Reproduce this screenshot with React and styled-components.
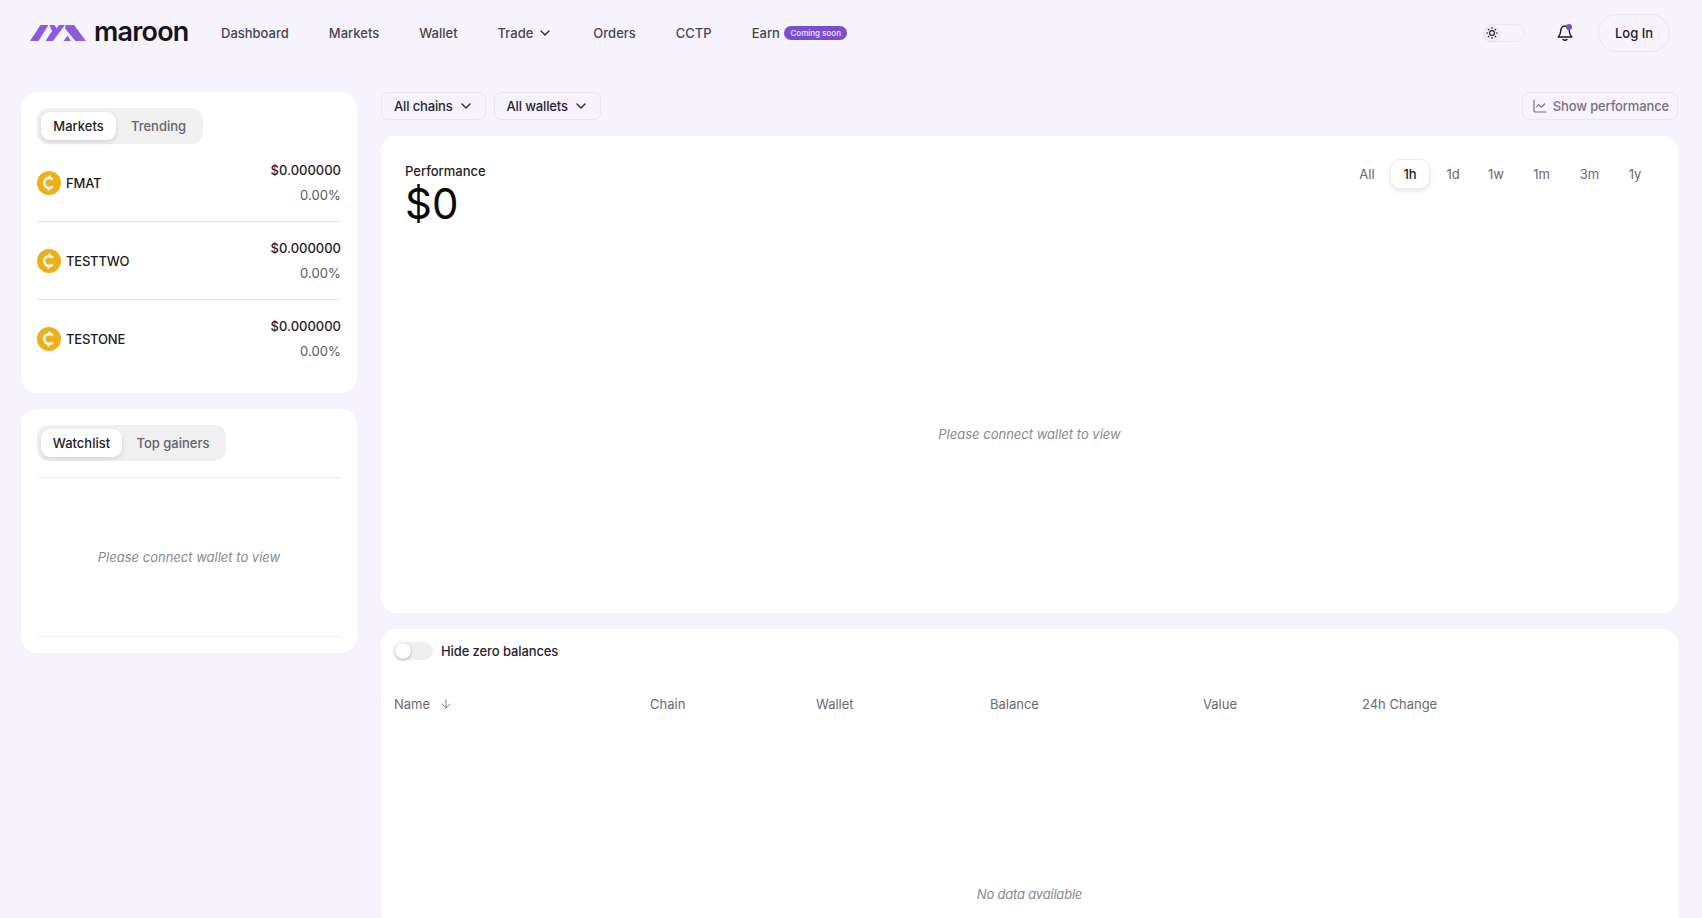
import React from "react"
import styled, { createGlobalStyle } from "styled-components"
import { ChevronDown, ArrowDown, ChartLine } from "lucide-react"

const GlobalStyle = createGlobalStyle`
  html, body {
    margin: 0;
    height: 918px;
    overflow: hidden;
    background: #f6f3fd;
    font-family: Inter, "Noto Sans", sans-serif;
    color: #1c1720;
  }
  * { box-sizing: border-box; }
`

const Header = styled.header`
  height: 66px;
  display: flex;
  align-items: center;
  padding: 0 32px 0 29px;
`

const Logo = styled.div`
  display: flex;
  align-items: center;
  gap: 8px;
  width: 192px;
`

const LogoText = styled.span`
  font-size: 27px;
  font-weight: 600;
  letter-spacing: -0.8px;
  color: #17121c;
  line-height: 1;
  margin-top: -4px;
`

const Nav = styled.nav`
  display: flex;
  align-items: center;
  gap: 40px;
`

const NavLink = styled.a`
  display: flex;
  align-items: center;
  gap: 4px;
  font-size: 13px;
  font-weight: 500;
  color: #47444e;
`

const Soon = styled.span`
  background: #7a4fcf;
  color: #efe8fb;
  font-size: 8px;
  font-weight: 500;
  height: 14px;
  padding: 0 6.500px;
  border-radius: 7px;
  display: flex;
  align-items: center;
`

const HeaderRight = styled.div`
  margin-left: auto;
  display: flex;
  align-items: center;
`

const ThemeToggle = styled.div`
  width: 42px;
  height: 18px;
  border: 1px solid #ebe8f1;
  border-radius: 9px;
  display: flex;
  align-items: center;
  margin-right: 32px;
`

const ThemeKnob = styled.div`
  width: 16px;
  height: 16px;
  border-radius: 50%;
  background: #f1eff4;
  box-shadow: 0 1px 2px rgba(0,0,0,.08);
  display: flex;
  align-items: center;
  justify-content: center;
`

const Bell = styled.div`
  position: relative;
  width: 16px;
  height: 18px;
  margin-right: 25px;
`

const BellDot = styled.span`
  position: absolute;
  top: 0;
  right: 1px;
  width: 6px;
  height: 6px;
  border-radius: 50%;
  background: #7a4fcf;
`

const LoginButton = styled.button`
  width: 72px;
  height: 38px;
  border-radius: 19px;
  border: 1px solid #e9e6f0;
  background: transparent;
  font-family: inherit;
  font-size: 13px;
  font-weight: 500;
  color: #1f1a26;
  padding: 0;
`

const Page = styled.div`
  display: grid;
  grid-template-columns: 336px 1fr;
  column-gap: 24px;
  padding: 26px 24px 0 21px;
`

const SideColumn = styled.aside`
  display: flex;
  flex-direction: column;
  gap: 16px;
`

const Card = styled.section`
  background: #fff;
  border-radius: 16px;
`

const SideCard = styled(Card)`
  padding: 16px 16px 0;
  height: ${p => p.$height}px;
`

const Tabs = styled.div`
  display: inline-flex;
  padding: 4px;
  background: #f0f0f0;
  border-radius: 12px;
  height: 36px;
`

const Tab = styled.div`
  display: flex;
  align-items: center;
  justify-content: center;
  width: ${p => p.$width}px;
  padding-left: ${p => (p.$active ? "0" : "2px")};
  font-size: 13px;
  font-weight: 500;
  border-radius: 9px;
  color: ${p => (p.$active ? "#24222a" : "#65636b")};
  background: ${p => (p.$active ? "#fff" : "transparent")};
  box-shadow: ${p => (p.$active ? "0 2px 5px rgba(0,0,0,.12)" : "none")};
`

const MarketRow = styled.div`
  height: 78px;
  display: flex;
  align-items: center;
  justify-content: space-between;
  border-bottom: ${p => (p.$last ? "none" : "1px solid #e2e2e4")};
`

const MarketName = styled.div`
  display: flex;
  align-items: center;
  gap: 5px;
  font-size: 13px;
  font-weight: 500;
  letter-spacing: -0.2px;
  color: #1e1a22;
`

const MarketPrice = styled.div`
  text-align: right;
  font-size: 13px;
  font-weight: 500;
  color: #2a1b28;
  line-height: 25px;
`

const MarketChange = styled.div`
  color: #5a5860;
  font-weight: 400;
  letter-spacing: 0.1px;
`

const WatchBody = styled.div`
  margin-top: 16px;
  height: 160px;
  border-top: 1px solid #efeff1;
  border-bottom: 1px solid #efeff1;
  display: flex;
  align-items: center;
  justify-content: center;
`

const Empty = styled.div`
  font-size: 13px;
  font-style: italic;
  color: #8a888e;
`

const Main = styled.main`
  min-width: 0;
`

const FilterBar = styled.div`
  display: flex;
  gap: 8px;
  height: 28px;
  margin-bottom: 16px;
`

const FilterButton = styled.div`
  display: flex;
  align-items: center;
  gap: 5px;
  border: 1px solid #e9e6f0;
  border-radius: 7px;
  font-size: 13px;
  font-weight: 500;
  letter-spacing: -0.15px;
  color: ${p => (p.$muted ? "#75727c" : "#28242e")};
  margin-left: ${p => (p.$end ? "auto" : "0")};
  padding: ${p => (p.$end ? "0 8px 0 9px" : "0 11px 0 12px")};
`

const PerformanceCard = styled(Card)`
  height: 477px;
  padding: 26px 24px 0;
  margin-bottom: 16px;
  display: flex;
  flex-direction: column;
`

const PerformanceTop = styled.div`
  display: flex;
  justify-content: space-between;
`

const PerformanceLabel = styled.div`
  font-size: 13px;
  font-weight: 500;
  color: #1f1d22;
  line-height: 18px;
`

const PerformanceValue = styled.div`
  font-size: 42px;
  font-weight: 400;
  color: #0a0a0a;
  line-height: 48px;
`

const Ranges = styled.div`
  display: flex;
  align-items: center;
  height: 30px;
  margin-top: -3px;
  gap: 4px;
`

const Range = styled.div`
  width: ${p => p.$width}px;
  height: 30px;
  display: flex;
  align-items: center;
  justify-content: center;
  font-size: 13px;
  font-weight: ${p => (p.$active ? 500 : 400)};
  color: ${p => (p.$active ? "#1c1a20" : "#6a686f")};
  border-radius: 10px;
  border: ${p => (p.$active ? "1px solid #ececee" : "none")};
  box-shadow: ${p => (p.$active ? "0 2px 4px rgba(0,0,0,.1)" : "none")};
`

const ChartArea = styled.div`
  flex: 1;
  display: flex;
  align-items: center;
  justify-content: center;
  padding-top: 26px;
`

const TableCard = styled(Card)`
  height: 400px;
  padding: 13px 13px 0;
`

const SwitchRow = styled.div`
  display: flex;
  align-items: center;
  gap: 8px;
  font-size: 13px;
  font-weight: 500;
  letter-spacing: -0.1px;
  color: #27232c;
  height: 18px;
`

const Switch = styled.div`
  width: 39px;
  height: 18px;
  background: #efeff0;
  border-radius: 9px;
  display: flex;
  align-items: center;
`

const SwitchKnob = styled.div`
  width: 16px;
  height: 16px;
  margin-left: 1px;
  border-radius: 50%;
  background: #fff;
  box-shadow: 0 1px 3px rgba(0,0,0,.3);
`

const ColumnRow = styled.div`
  display: grid;
  grid-template-columns: 256px 166px 174px 213px 159px 1fr;
  margin-top: 35px;
  font-size: 13px;
  font-weight: 400;
  color: #6c6a71;
  height: 18px;
  align-items: center;
`

const ColumnName = styled.div`
  display: flex;
  align-items: center;
  gap: 9px;
`

const NoData = styled(Empty)`
  text-align: center;
  letter-spacing: -0.2px;
  margin-top: 173px;
`

const markets = ["FMAT", "TESTTWO", "TESTONE"]
const navItems = ["Dashboard", "Markets", "Wallet"]
const navItemsAfter = ["Orders", "CCTP"]
const ranges = [
  ["All", 38],
  ["1h", 40],
  ["1d", 38],
  ["1w", 40],
  ["1m", 43],
  ["3m", 45],
  ["1y", 38],
]
const columns = ["Chain", "Wallet", "Balance", "Value", "24h Change"]

// brand mark, three slanted strokes
const LogoMark = () => (
  <svg width="57" height="16" viewBox="0 0 57 16" fill="#8b5cdc">
    <path d="M1 16 L11.500 0 H19.500 L9.500 16 Z" />
    <path d="M16.500 16 L23 6 L20.500 0 H25.500 L27.500 3.500 L30 0 H36 L24 16 Z" />
    <path d="M36.500 0 H45 L57 16 H46.500 L36 3.500 Z" />
    <path d="M34.500 16 L38.500 10.500 L42 16 Z" />
  </svg>
)

const SunIcon = () => (
  <svg width="12" height="12" viewBox="0 0 12 12" fill="none" stroke="#1c1720" strokeWidth="1.1" strokeLinecap="round">
    <circle cx="6" cy="6" r="2.4" />
    <path d="M6 .6v1M6 10.400v1M.6 6h1M10.400 6h1M2.200 2.200l.7.7M9.100 9.100l.7.7M2.200 9.800l.7-.7M9.100 2.900l.7-.7" />
  </svg>
)

const BellIcon = () => (
  <svg width="16" height="18" viewBox="0 0 16 18" fill="none" stroke="#1c1720" strokeWidth="1.4" strokeLinejoin="round" strokeLinecap="round">
    <path d="M8 2C5.200 2 3.800 4.200 3.800 6.600c0 3-1 4.500-2.600 6.400h13.600c-1.600-1.900-2.600-3.400-2.600-6.400C12.200 4.200 10.800 2 8 2Z" />
    <path d="M6 15.500c.8 1 3.200 1 4 0" />
  </svg>
)

const CoinIcon = () => (
  <svg width="24" height="24" viewBox="0 0 24 24">
    <circle cx="12" cy="12" r="12" fill="#eeb019" />
    <path d="M15.800 8.600A5 5 0 1 0 15.800 15.400" fill="none" stroke="#fff" strokeWidth="2.400" />
    <path d="M12.900 4.500 L11.900 7M12.100 17 L11.100 19.500" stroke="#fff" strokeWidth="1.800" />
  </svg>
)

const TabSwitcher = ({ items }) => (
  <Tabs>
    {items.map(([label, width], i) => (
      <Tab key={label} $width={width} $active={i === 0}>{label}</Tab>
    ))}
  </Tabs>
)

export default function App() {
  return (
    <>
      <GlobalStyle />
      <Header>
        <Logo>
          <LogoMark />
          <LogoText>maroon</LogoText>
        </Logo>
        <Nav>
          {navItems.map(item => <NavLink key={item}>{item}</NavLink>)}
          <NavLink>Trade <ChevronDown size={16} color="#2a2630" strokeWidth={2} /></NavLink>
          {navItemsAfter.map(item => <NavLink key={item}>{item}</NavLink>)}
          <NavLink>Earn <Soon>Coming soon</Soon></NavLink>
        </Nav>
        <HeaderRight>
          <ThemeToggle><ThemeKnob><SunIcon /></ThemeKnob></ThemeToggle>
          <Bell><BellIcon /><BellDot /></Bell>
          <LoginButton>Log In</LoginButton>
        </HeaderRight>
      </Header>
      <Page>
        <SideColumn>
          <SideCard $height={301}>
            <TabSwitcher items={[["Markets", 75], ["Trending", 83]]} />
            {markets.map((name, i) => (
              <MarketRow key={name} $last={i === markets.length - 1}>
                <MarketName><CoinIcon />{name}</MarketName>
                <MarketPrice>
                  $0.000000
                  <MarketChange>0.00%</MarketChange>
                </MarketPrice>
              </MarketRow>
            ))}
          </SideCard>
          <SideCard $height={244}>
            <TabSwitcher items={[["Watchlist", 81], ["Top gainers", 100]]} />
            <WatchBody><Empty>Please connect wallet to view</Empty></WatchBody>
          </SideCard>
        </SideColumn>
        <Main>
          <FilterBar>
            <FilterButton>All chains <ChevronDown size={16} /></FilterButton>
            <FilterButton>All wallets <ChevronDown size={16} /></FilterButton>
            <FilterButton $muted $end><ChartLine size={16} strokeWidth={1.8} /> Show performance</FilterButton>
          </FilterBar>
          <PerformanceCard>
            <PerformanceTop>
              <div>
                <PerformanceLabel>Performance</PerformanceLabel>
                <PerformanceValue>$0</PerformanceValue>
              </div>
              <Ranges>
                {ranges.map(([label, width]) => (
                  <Range key={label} $width={width} $active={label === "1h"}>{label}</Range>
                ))}
              </Ranges>
            </PerformanceTop>
            <ChartArea><Empty>Please connect wallet to view</Empty></ChartArea>
          </PerformanceCard>
          <TableCard>
            <SwitchRow><Switch><SwitchKnob /></Switch>Hide zero balances</SwitchRow>
            <ColumnRow>
              <ColumnName>Name <ArrowDown size={14} strokeWidth={1.5} /></ColumnName>
              {columns.map(col => <div key={col}>{col}</div>)}
            </ColumnRow>
            <NoData>No data available</NoData>
          </TableCard>
        </Main>
      </Page>
    </>
  )
}
